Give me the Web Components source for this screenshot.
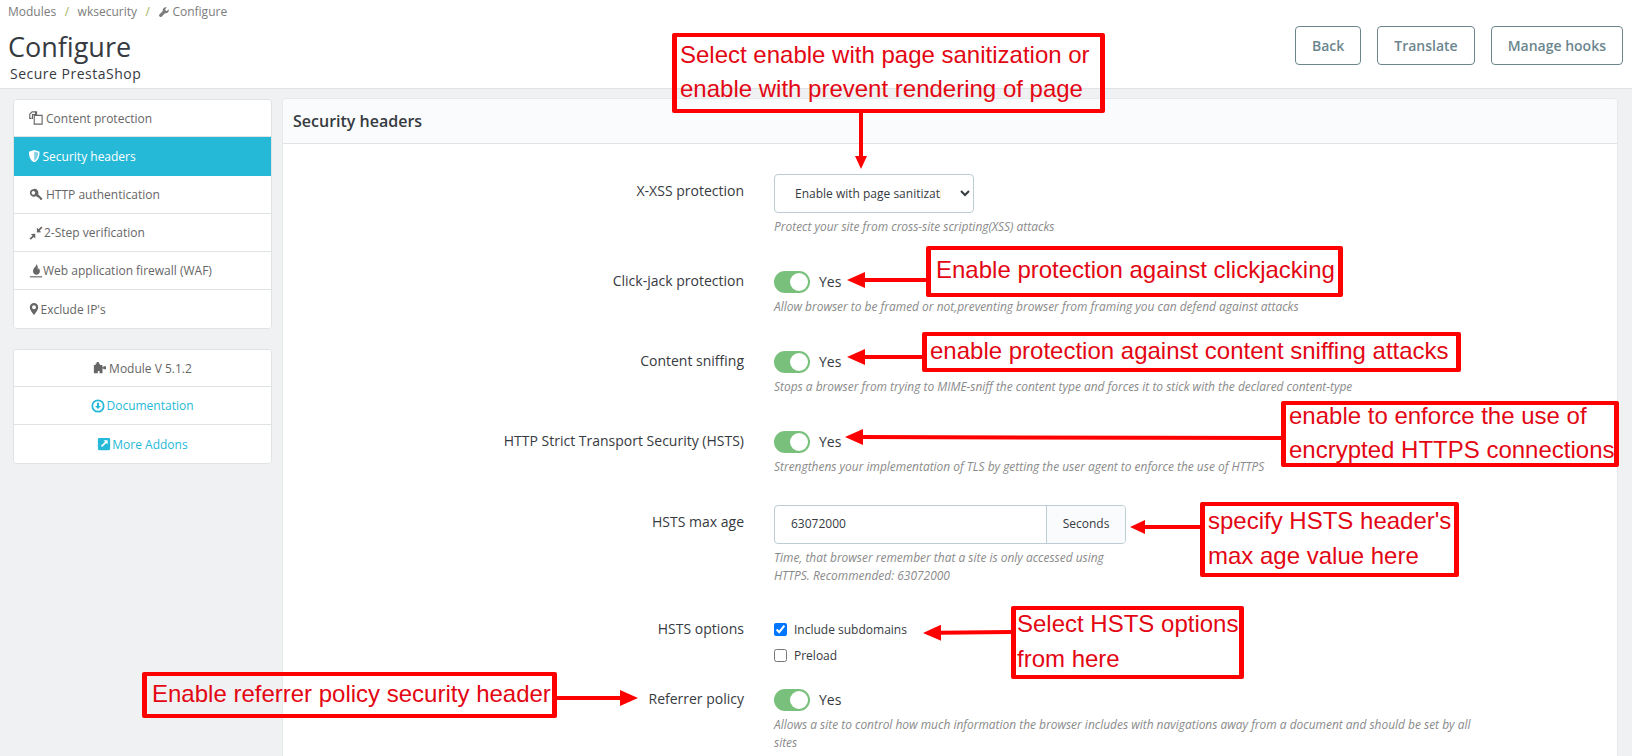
<!DOCTYPE html>
<html lang="en">
<head>
<meta charset="utf-8">
<title>Configure</title>
<style>
  html, body { margin: 0; height: 756px; overflow: hidden; }
  body { background: #eff1f2; font-family: "Open Sans", sans-serif; color: #363a41; position: relative; }
  a { color: inherit; }
</style>
</head>
<body>
<ps-page-head>
  <ps-crumbs></ps-crumbs>
</ps-page-head>

<ps-layout>
  <div slot="side">
    <ps-side-card>
      <ps-side-item icon="copy" icon-width="17">Content protection</ps-side-item>
      <ps-side-item icon="shield" icon-width="13.500" icon-size="12.500" active>Security headers</ps-side-item>
      <ps-side-item icon="key" icon-width="17">HTTP authentication</ps-side-item>
      <ps-side-item icon="compress" icon-width="15">2-Step verification</ps-side-item>
      <ps-side-item icon="fire" icon-width="14">Web application firewall (WAF)</ps-side-item>
      <ps-side-item icon="marker" icon-width="11.500" icon-size="12">Exclude IP's</ps-side-item>
    </ps-side-card>
    <ps-side-card class="second">
      <ps-side-item icon="puzzle" icon-width="16" center>Module V 5.1.2</ps-side-item>
      <ps-side-item icon="download" icon-width="15" center link>Documentation</ps-side-item>
      <ps-side-item icon="external" icon-width="15" center link>More Addons</ps-side-item>
    </ps-side-card>
  </div>
  <ps-panel heading="Security headers">
    <ps-row label="X-XSS protection" help="Protect your site from cross-site scripting(XSS) attacks" height="97" offset="8">
      <ps-select></ps-select>
    </ps-row>
    <ps-row label="Click-jack protection" help="Allow browser to be framed or not,preventing browser from framing you can defend against attacks" height="80" offset="1">
      <ps-switch></ps-switch>
    </ps-row>
    <ps-row label="Content sniffing" help="Stops a browser from trying to MIME-sniff the content type and forces it to stick with the declared content-type" height="80" offset="1">
      <ps-switch></ps-switch>
    </ps-row>
    <ps-row label="HTTP Strict Transport Security (HSTS)" help="Strengthens your implementation of TLS by getting the user agent to enforce the use of HTTPS" height="74" offset="1">
      <ps-switch></ps-switch>
    </ps-row>
    <ps-row label="HSTS max age" help="Time, that browser remember that a site is only accessed using HTTPS. Recommended: 63072000" height="111" offset="8" narrow>
      <ps-input-group value="63072000" unit="Seconds"></ps-input-group>
    </ps-row>
    <ps-row label="HSTS options" height="73" offset="4">
      <ps-check checked>Include subdomains</ps-check>
      <ps-check>Preload</ps-check>
    </ps-row>
    <ps-row label="Referrer policy" help="Allows a site to control how much information the browser includes with navigations away from a document and should be set by all sites" height="80" offset="1">
      <ps-switch></ps-switch>
    </ps-row>
  </ps-panel>
</ps-layout>

<ps-arrow x1="861" y1="113" x2="861" y2="169" head="13" half="6"></ps-arrow>
<ps-arrow x1="926" y1="280" x2="847" y2="280"></ps-arrow>
<ps-arrow x1="922" y1="357" x2="847" y2="357"></ps-arrow>
<ps-arrow x1="1281" y1="438" x2="845" y2="437"></ps-arrow>
<ps-arrow x1="1200" y1="527" x2="1130" y2="527" head="15" half="7"></ps-arrow>
<ps-arrow x1="1011" y1="632" x2="923" y2="633"></ps-arrow>
<ps-arrow x1="557" y1="698" x2="638" y2="698"></ps-arrow>

<ps-note x="672" y="33" w="433" h="80" pad="3">Select enable with page sanitization or<br>enable with prevent rendering of page</ps-note>
<ps-note x="926" y="246" w="417" h="51" pad="5">Enable protection against clickjacking</ps-note>
<ps-note x="922" y="332" w="539" h="40" pad="3">enable protection against content sniffing attacks</ps-note>
<ps-note x="1281" y="401" w="338" h="66" pad="3">enable to enforce the use of<br>encrypted HTTPS connections</ps-note>
<ps-note x="1200" y="502" w="259" h="75" pad="3">specify HSTS header's<br>max age value here</ps-note>
<ps-note x="1011" y="606" w="233" h="73" pad="1">Select HSTS options<br>from here</ps-note>
<ps-note x="142" y="672" w="415" h="46" pad="5">Enable referrer policy security header</ps-note>

<script>
'use strict';

const ICONS = {
  wrench: '<path d="M15.400 3.600l-2.700 2.700-2.300-.6-.6-2.300L12.500.7C10.600 0 8.500.4 7.200 1.800 6 3 5.600 4.800 6.100 6.400L.6 11.900c-.8.800-.8 2 0 2.800l.7.7c.8.800 2 .8 2.800 0l5.500-5.500c1.600.5 3.400.1 4.600-1.100 1.400-1.300 1.800-3.400 1.200-5.200z"/>',
  copy: '<path fill="none" stroke="currentColor" stroke-width="1.300" d="M3 8.500H.9V3.600L3.600 1h5v4M7.500 1v3H4v5M6 5h9v10H6z"/>',
  shield: '<path d="M8 0L1.200 2.200C1.200 9 3 13.400 8 16c5-2.600 6.800-7 6.800-13.800z"/><path fill="#7fd0e4" d="M8 2v12c3.200-2 4.800-5.200 5-10.400z"/>',
  key: '<path d="M5.500 1a4.500 4.500 0 1 0 2.600 8.200l1.400 1.400 1.200-.2.300 1.400 1.300.2.300 1.400 1.400.4 1.500-1.500-5.100-5.200A4.500 4.500 0 0 0 5.500 1zm-.5 2.400a2.100 2.100 0 1 1 0 4.200 2.100 2.100 0 0 1 0-4.200z"/>',
  compress: '<path d="M9 7.500V2l1.800 1.800L14 .6l1.400 1.400-3.200 3.200L14 7zM7.200 8.800v5.500l-1.800-1.800L2 15.800.6 14.400 4 11 2.200 9.200z"/>',
  fire: '<path d="M8.500 0c.5 2.600-3.900 4.500-3.900 8.200 0 2.300 1.700 4 3.900 4s3.900-1.700 3.900-4c0-1.300-.5-2.600-1.300-3.500-.1 1-.6 1.600-1.200 1.800C10.300 4.400 10.200 1.500 8.500 0z"/><rect x="1" y="14" width="14" height="1.300"/>',
  marker: '<path d="M8 0a5.600 5.600 0 0 0-5.600 5.600C2.400 9.400 8 16 8 16s5.600-6.600 5.600-10.400A5.600 5.600 0 0 0 8 0zm0 8.200a2.600 2.600 0 1 1 0-5.200 2.600 2.600 0 0 1 0 5.200z"/>',
  puzzle: '<path d="M1 4.500h2V2.800h1.200V1h2.400v1.800h1.200v1.700h3V7h1.200V6h2.800v3.500h-2.800v-1h-1.200V14H7.500v-2.500h-2V14H1z"/>',
  download: '<path d="M8 .5a7.500 7.500 0 1 0 0 15 7.500 7.500 0 0 0 0-15zm0 2a5.500 5.500 0 1 1 0 11 5.500 5.500 0 0 1 0-11z"/><path d="M6.800 4.200h2.400V8H11.400L8 11.500 4.600 8h2.200z"/>',
  external: '<path fill-rule="evenodd" d="M2.500 1h11A1.500 1.500 0 0 1 15 2.500v11a1.500 1.500 0 0 1-1.500 1.500h-11A1.500 1.500 0 0 1 1 13.500v-11A1.500 1.500 0 0 1 2.500 1zm5 2.800l1.700 1.600-4.700 4.700 1.400 1.400 4.700-4.700 1.600 1.700V3.800z"/>',
};

function iconSvg(name, size) {
  return `<svg width="${size}" height="${size}" viewBox="0 0 16 16" fill="currentColor" aria-hidden="true">${ICONS[name]}</svg>`;
}

class PsCrumbs extends HTMLElement {
  constructor() {
    super();
    this.attachShadow({ mode: 'open' });
    this.shadowRoot.innerHTML = `
      <style>
        :host { display: flex; align-items: center; font-size: 12px; line-height: 18px; color: #7c7c7c; }
        i { font-style: normal; color: #9fb25c; margin: 0 8.500px; }
        i + span { display: inline-flex; align-items: center; gap: 3px; }
        .last { margin-left: 1px; }
        svg { display: block; }
      </style>
      <span>Modules</span><i>/</i><span>wksecurity</span><i>/</i><span class="last">${iconSvg('wrench', 10)}Configure</span>
    `;
  }
}
customElements.define('ps-crumbs', PsCrumbs);

class PsPageHead extends HTMLElement {
  constructor() {
    super();
    this.attachShadow({ mode: 'open' });
    this.shadowRoot.innerHTML = `
      <style>
        :host { display: flex; justify-content: space-between; box-sizing: border-box; height: 89px; background: #fff; border-bottom: 1px solid #dfe3e4; padding: 3px 9px 0 8px; }
        h1 { margin: 8px 0 0; font-size: 27px; font-weight: 400; line-height: 36px; color: #363a41; }
        p { margin: -1px 0 0 2px; font-size: 14px; line-height: 20px; letter-spacing: .5px; color: #363a41; }
        .actions { display: flex; gap: 16px; padding-top: 23px; }
        button { box-sizing: border-box; height: 39px; padding: 0 16px; background: #fff; border: 1px solid #6c868e; border-radius: 4px; color: #6c868e; font: 600 14px "Open Sans", sans-serif; }
      </style>
      <div>
        <slot></slot>
        <h1>Configure</h1>
        <p>Secure PrestaShop</p>
      </div>
      <div class="actions">
        <button>Back</button><button>Translate</button><button>Manage hooks</button>
      </div>
    `;
  }
}
customElements.define('ps-page-head', PsPageHead);

class PsLayout extends HTMLElement {
  constructor() {
    super();
    this.attachShadow({ mode: 'open' });
    this.shadowRoot.innerHTML = `
      <style>
        :host { display: flex; gap: 11px; padding: 10px 15px 0 13px; height: 667px; box-sizing: border-box; }
        .side { width: 259px; flex: none; }
        .main { flex: 1; display: flex; min-width: 0; }
        ::slotted(ps-panel) { flex: 1; }
      </style>
      <div class="side"><slot name="side"></slot></div>
      <div class="main"><slot></slot></div>
    `;
  }
}
customElements.define('ps-layout', PsLayout);

class PsSideCard extends HTMLElement {
  constructor() {
    super();
    this.attachShadow({ mode: 'open' });
    this.shadowRoot.innerHTML = `
      <style>
        :host { display: block; background: #fff; border: 1px solid #dfe3e4; border-radius: 4px; overflow: hidden; }
        :host(.second) { margin-top: 20px; }
      </style>
      <slot></slot>
    `;
  }
}
customElements.define('ps-side-card', PsSideCard);

class PsSideItem extends HTMLElement {
  connectedCallback() {
    if (this.shadowRoot) return;
    const tight = this.hasAttribute('icon-size');
    this.attachShadow({ mode: 'open' });
    this.shadowRoot.innerHTML = `
      <style>
        :host { display: flex; align-items: center; box-sizing: border-box; height: 38px; padding: 0 15px; font-size: 12px; color: #666; background: #fff; border-bottom: 1px solid #dfe3e4; }
        :host(:first-child) { height: 37px; }
        :host(:last-child) { border-bottom: 0; }
        :host([active]) { background: #25b9d7; color: #fff; margin: 0 -1px; padding-left: 16px; height: 39px; border-bottom-color: #25b9d7; }
        :host([center]) { justify-content: center; }
        :host([link]) { color: #25b9d7; }
        .icon { flex: none; width: ${this.getAttribute('icon-width')}px; }
        svg { display: block; margin-left: ${tight ? -1.5 : 0}px; }
      </style>
      <span class="icon">${iconSvg(this.getAttribute('icon'), this.getAttribute('icon-size') || 14)}</span><span><slot></slot></span>
    `;
  }
}
customElements.define('ps-side-item', PsSideItem);

class PsPanel extends HTMLElement {
  connectedCallback() {
    if (this.shadowRoot) return;
    this.attachShadow({ mode: 'open' });
    this.shadowRoot.innerHTML = `
      <style>
        :host { display: block; background: #fff; border-radius: 4px 4px 0 0; box-shadow: 0 0 0 1px #e6e9ea; overflow: hidden; }
        header { box-sizing: border-box; height: 45px; padding: 0 10px; display: flex; align-items: center; background: #fafbfc; border-bottom: 1px solid #dfe3e4; font-size: 16px; font-weight: 600; color: #363a41; }
        .body { padding-top: 30px; }
      </style>
      <header>${this.getAttribute('heading')}</header>
      <div class="body"><slot></slot></div>
    `;
  }
}
customElements.define('ps-panel', PsPanel);

class PsRow extends HTMLElement {
  connectedCallback() {
    if (this.shadowRoot) return;
    const help = this.getAttribute('help');
    this.attachShadow({ mode: 'open' });
    this.shadowRoot.innerHTML = `
      <style>
        :host { display: grid; grid-template-columns: 461px 1fr; column-gap: 30px; box-sizing: border-box; height: ${this.getAttribute('height')}px; }
        label { text-align: right; font-size: 14px; line-height: 18px; color: #363a41; padding-top: ${this.getAttribute('offset')}px; }
        .help { margin: 5px 0 0; max-width: ${this.hasAttribute('narrow') ? 352 : 706}px; font-size: 11.950px; line-height: 18px; font-style: italic; color: #8a8a8a; }
        .control { min-width: 0; }
      </style>
      <label>${this.getAttribute('label')}</label>
      <div class="control">
        <slot></slot>
        ${help ? `<p class="help">${help}</p>` : ''}
      </div>
    `;
  }
}
customElements.define('ps-row', PsRow);

class PsSelect extends HTMLElement {
  constructor() {
    super();
    this.attachShadow({ mode: 'open' });
    this.shadowRoot.innerHTML = `
      <style>
        :host { display: block; }
        select { display: block; box-sizing: border-box; width: 200px; height: 39px; padding: 0 16px; background: #fff; border: 1px solid #bbcdd2; border-radius: 4px; color: #363a41; font: 12px "Open Sans", sans-serif; }
      </style>
      <select>
        <option>Enable with page sanitization</option>
        <option>Enable with prevent rendering of page</option>
        <option>Disable</option>
      </select>
    `;
  }
}
customElements.define('ps-select', PsSelect);

class PsSwitch extends HTMLElement {
  constructor() {
    super();
    this.attachShadow({ mode: 'open' });
    this.shadowRoot.innerHTML = `
      <style>
        :host { display: flex; align-items: center; gap: 9px; height: 22px; font-size: 14px; color: #363a41; }
        .track { box-sizing: border-box; width: 36px; height: 22px; padding: 2px; border-radius: 11px; background: #78c07b; display: flex; justify-content: flex-end; }
        .knob { width: 18px; height: 18px; border-radius: 50%; background: #fff; }
        span { margin-top: -1px; }
      </style>
      <div class="track"><div class="knob"></div></div><span>Yes</span>
    `;
  }
}
customElements.define('ps-switch', PsSwitch);

class PsInputGroup extends HTMLElement {
  connectedCallback() {
    if (this.shadowRoot) return;
    this.attachShadow({ mode: 'open' });
    this.shadowRoot.innerHTML = `
      <style>
        :host { display: flex; box-sizing: border-box; width: 352px; height: 39px; border: 1px solid #bbcdd2; border-radius: 4px; font-size: 12px; color: #363a41; overflow: hidden; }
        .value { flex: 1; display: flex; align-items: center; padding: 0 0 2px 16px; }
        .unit { width: 78px; display: flex; align-items: center; justify-content: center; padding-bottom: 2px; background: #fafbfc; border-left: 1px solid #bbcdd2; }
      </style>
      <div class="value">${this.getAttribute('value')}</div>
      <div class="unit">${this.getAttribute('unit')}</div>
    `;
  }
}
customElements.define('ps-input-group', PsInputGroup);

class PsCheck extends HTMLElement {
  connectedCallback() {
    if (this.shadowRoot) return;
    this.attachShadow({ mode: 'open' });
    this.shadowRoot.innerHTML = `
      <style>
        :host { display: flex; align-items: center; gap: 7px; height: 26px; font-size: 12px; color: #363a41; }
        input { margin: 0; width: 13px; height: 13px; flex: none; }
      </style>
      <input type="checkbox" ${this.hasAttribute('checked') ? 'checked' : ''}><span><slot></slot></span>
    `;
  }
}
customElements.define('ps-check', PsCheck);

// Red callouts drawn over the screenshot: their place on the page is the content.
class PsNote extends HTMLElement {
  connectedCallback() {
    if (this.shadowRoot) return;
    const box = ['x', 'y', 'w', 'h'].map((key) => this.getAttribute(key));
    this.attachShadow({ mode: 'open' });
    this.shadowRoot.innerHTML = `
      <style>
        :host { position: absolute; left: ${box[0]}px; top: ${box[1]}px; width: ${box[2]}px; height: ${box[3]}px; box-sizing: border-box; display: flex; align-items: center; border: solid #f00; border-width: 4px 5px; border-radius: 2px; padding: 0 0 2px ${this.getAttribute('pad')}px; white-space: nowrap; font: 24px/34.500px "Liberation Sans", sans-serif; color: #e30613; }
      </style>
      <div><slot></slot></div>
    `;
  }
}
customElements.define('ps-note', PsNote);

class PsArrow extends HTMLElement {
  connectedCallback() {
    if (this.shadowRoot) return;
    const [x1, y1, x2, y2] = ['x1', 'y1', 'x2', 'y2'].map((key) => Number(this.getAttribute(key)));
    const head = Number(this.getAttribute('head') || 18);
    const half = Number(this.getAttribute('half') || 8);
    const length = Math.hypot(x2 - x1, y2 - y1);
    const angle = (Math.atan2(y2 - y1, x2 - x1) * 180) / Math.PI;
    this.attachShadow({ mode: 'open' });
    this.shadowRoot.innerHTML = `
      <style>
        :host { position: absolute; left: 0; top: 0; display: block; }
        svg { display: block; overflow: visible; }
      </style>
      <svg width="1" height="1">
        <g transform="translate(${x1} ${y1}) rotate(${angle})">
          <rect x="0" y="-2" width="${length - head + 2}" height="4" fill="#f00"/>
          <polygon points="${length - head},${-half} ${length},0 ${length - head},${half}" fill="#f00"/>
        </g>
      </svg>
    `;
  }
}
customElements.define('ps-arrow', PsArrow);
</script>
</body>
</html>
